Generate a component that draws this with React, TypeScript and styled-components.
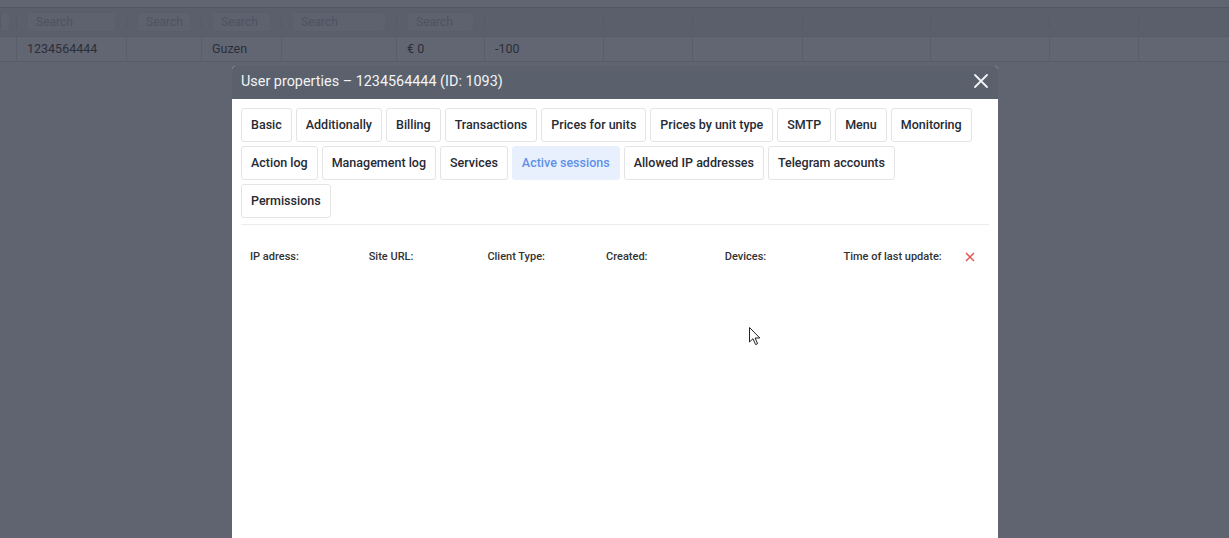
import React from "react";
import styled, { createGlobalStyle } from "styled-components";

const Global = createGlobalStyle`
  html, body { margin: 0; padding: 0; }
  body {
    background: #f3f4f6;
    font-family: Roboto, "Noto Sans", "Liberation Sans", sans-serif;
    overflow: hidden;
  }
`;

const Page = styled.div`
  width: 1229px;
  height: 538px;
  position: relative;
  overflow: hidden;
`;

const cols = [16, 110, 75, 80, 115, 88, 119, 89, 110, 128, 119, 89, 91];

const TopRow = styled.div`
  height: 7px;
  border-bottom: 1px solid #c2c4c9;
  background: #f7f7f8;
`;

const FilterRow = styled.div`
  display: flex;
  height: 28px;
  background: #e2e3e6;
  border-bottom: 1px solid #d0d2d6;
`;

const FilterCell = styled.div<{ $w: number; $first?: boolean }>`
  width: ${(p) => p.$w}px;
  flex: none;
  box-sizing: border-box;
  display: flex;
  align-items: center;
  padding: ${(p) => (p.$first ? "0 12px 0 0" : "0 10px 0 11px")};
  position: relative;
  &::before {
    content: "";
    position: absolute;
    left: 0;
    top: 7px;
    bottom: 7px;
    width: 1px;
    background: #cfd1d5;
  }
`;

const SearchBox = styled.div`
  flex: 1;
  height: 20px;
  box-sizing: border-box;
  border: 1px solid #dddfe3;
  border-radius: 3px;
  background: #ebecee;
  color: #b3b6bc;
  font-size: 12px;
  line-height: 18px;
  padding-left: 8px;
  white-space: nowrap;
  overflow: hidden;
`;

const DataRow = styled.div`
  display: flex;
  height: 24px;
  background: #fafafa;
  border-bottom: 1px solid #d6d8dc;
`;

const DataCell = styled.div<{ $w: number }>`
  width: ${(p) => p.$w}px;
  flex: none;
  box-sizing: border-box;
  border-left: 1px solid #dcdee2;
  padding-left: 10px;
  font-size: 12.5px;
  line-height: 24px;
  color: #333;
  white-space: nowrap;
  &:first-child { border-left: none; }
`;

const Overlay = styled.div`
  position: absolute;
  inset: 0;
  background: rgba(39, 45, 61, 0.72);
`;

const Modal = styled.div`
  position: absolute;
  left: 232px;
  top: 66px;
  width: 766px;
  height: 520px;
  background: #fff;
  border-radius: 4px 4px 0 0;
  overflow: hidden;
  display: flex;
  flex-direction: column;
`;

const ModalHeader = styled.div`
  height: 33px;
  flex: none;
  box-sizing: border-box;
  background: #5a616d;
  display: flex;
  align-items: center;
  justify-content: space-between;
  padding: 0 8px 3px 9px;
`;

const Title = styled.div`
  color: #f2f3f5;
  font-size: 14.4px;
`;

const CloseBtn = styled.div`
  width: 18px;
  height: 18px;
  display: flex;
  align-items: center;
  justify-content: center;
`;

const Body = styled.div`
  padding: 9px 9px 0 9px;
`;

const Tabs = styled.div`
  display: flex;
  flex-wrap: wrap;
  gap: 4px;
  padding: 0 4px 6px 0;
  border-bottom: 1px solid #ececec;
`;

const Tab = styled.div<{ $active?: boolean }>`
  height: 34px;
  box-sizing: border-box;
  padding: 0 9px;
  border: 1px solid ${(p) => (p.$active ? "#e8f0fd" : "#e4e4e4")};
  border-radius: 3px;
  background: ${(p) => (p.$active ? "#e8f0fd" : "#fff")};
  color: ${(p) => (p.$active ? "#5f91e8" : "#262a33")};
  font-size: 12.5px;
  font-weight: 500;
  line-height: 32px;
  white-space: nowrap;
`;

const SessionHead = styled.div`
  display: grid;
  grid-template-columns: repeat(6, 118.7px) 1fr;
  align-items: center;
  padding: 25px 0 0 9px;
`;

const HeadLabel = styled.div`
  font-size: 11px;
  font-weight: 500;
  color: #333;
  white-space: nowrap;
`;

const DeleteX = styled.div`
  display: flex;
  align-items: center;
  padding-left: 3px;
`;

const Cursor = styled.svg`
  position: absolute;
  left: 749px;
  top: 327px;
`;

const tabs = [
  "Basic",
  "Additionally",
  "Billing",
  "Transactions",
  "Prices for units",
  "Prices by unit type",
  "SMTP",
  "Menu",
  "Monitoring",
  "Action log",
  "Management log",
  "Services",
  "Active sessions",
  "Allowed IP addresses",
  "Telegram accounts",
  "Permissions",
];

const searches: Record<number, boolean> = { 0: true, 1: true, 2: true, 3: true, 4: true, 5: true };
const dataVals: Record<number, string> = { 1: "1234564444", 3: "Guzen", 5: "€ 0", 6: "-100" };

export default function App() {
  return (
    <Page>
      <Global />
      <TopRow />
      <FilterRow>
        {cols.map((w, i) => (
          <FilterCell key={i} $w={w} $first={i === 0}>
            {searches[i] ? <SearchBox>{i === 0 ? "" : "Search"}</SearchBox> : null}
          </FilterCell>
        ))}
      </FilterRow>
      <DataRow>
        {cols.map((w, i) => (
          <DataCell key={i} $w={w}>
            {dataVals[i] ?? ""}
          </DataCell>
        ))}
      </DataRow>
      <Overlay />
      <Modal>
        <ModalHeader>
          <Title>User properties – 1234564444 (ID: 1093)</Title>
          <CloseBtn>
            <svg width="14" height="14" viewBox="0 0 14 14">
              <path d="M1 1L13 13M13 1L1 13" stroke="#f2f3f5" strokeWidth="1.8" strokeLinecap="round" />
            </svg>
          </CloseBtn>
        </ModalHeader>
        <Body>
          <Tabs>
            {tabs.map((t) => (
              <Tab key={t} $active={t === "Active sessions"}>
                {t}
              </Tab>
            ))}
          </Tabs>
          <SessionHead>
            <HeadLabel>IP adress:</HeadLabel>
            <HeadLabel>Site URL:</HeadLabel>
            <HeadLabel>Client Type:</HeadLabel>
            <HeadLabel>Created:</HeadLabel>
            <HeadLabel>Devices:</HeadLabel>
            <HeadLabel>Time of last update:</HeadLabel>
            <DeleteX>
              <svg width="10" height="10" viewBox="0 0 10 10">
                <path d="M1 1L9 9M9 1L1 9" stroke="#e05a5a" strokeWidth="1.5" />
              </svg>
            </DeleteX>
          </SessionHead>
        </Body>
      </Modal>
      <Cursor width="12" height="19" viewBox="0 0 12 19">
        <path d="M0.5 0.5 L0.5 15 L4 11.7 L6.6 17.6 L8.6 16.7 L6.1 11 L10.8 11 Z" fill="#fff" stroke="#222" strokeWidth="1" />
      </Cursor>
    </Page>
  );
}
